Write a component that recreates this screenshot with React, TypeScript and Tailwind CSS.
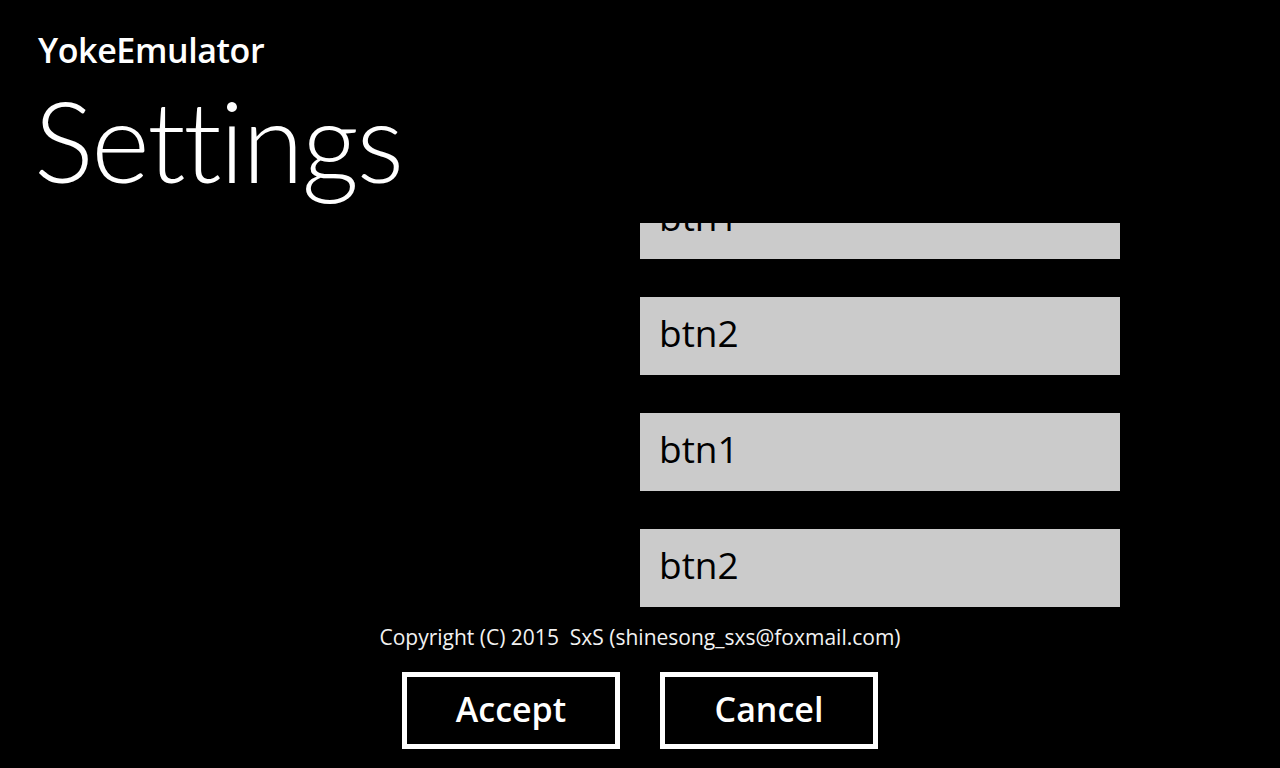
import React from "react";

const items = ["btn1", "btn2", "btn1", "btn2"];

export default function App() {
  return (
    <div
      className="w-[1280px] h-[768px] bg-black text-white overflow-hidden flex flex-col"
      style={{ fontFamily: '"Open Sans", "Noto Sans", sans-serif' }}
    >
      <div className="h-[223px] pl-[38px] pt-[33px] flex flex-col">
        <div className="text-[34px] leading-[34px] font-semibold tracking-[-0.4px]">YokeEmulator</div>
        <div
          className="mt-[17px] text-[112px] leading-[112px] font-light -ml-[4px] tracking-[-2.2px] [font-variant-ligatures:none]"
          style={{ fontFamily: 'Lato, "Open Sans", sans-serif' }}
        >
          Settings
        </div>
      </div>

      <div className="h-[387px] ml-[640px] w-[480px] overflow-hidden">
        <div className="-mt-[42px] flex flex-col gap-[38px]">
          {items.map((t, i) => (
            <div
              key={i}
              className="h-[78px] bg-[#cbcbcb] text-black text-[37px] leading-[37px] pt-[17px] pl-[19px]"
            >
              {t}
            </div>
          ))}
        </div>
      </div>

      <div className="mt-[17px] text-[21px] leading-[21px] text-center whitespace-pre text-[#f2f2f2]">
        {"Copyright (C) 2015  SxS (shinesong_sxs@foxmail.com)"}
      </div>

      <div className="mt-[24px] flex justify-center gap-[40px]">
        <button className="w-[218px] h-[77px] border-[5px] border-white bg-black text-white text-[34px] font-semibold flex items-center justify-center pb-[2px]">
          Accept
        </button>
        <button className="w-[218px] h-[77px] border-[5px] border-white bg-black text-white text-[34px] font-semibold flex items-center justify-center pb-[2px]">
          Cancel
        </button>
      </div>
    </div>
  );
}
